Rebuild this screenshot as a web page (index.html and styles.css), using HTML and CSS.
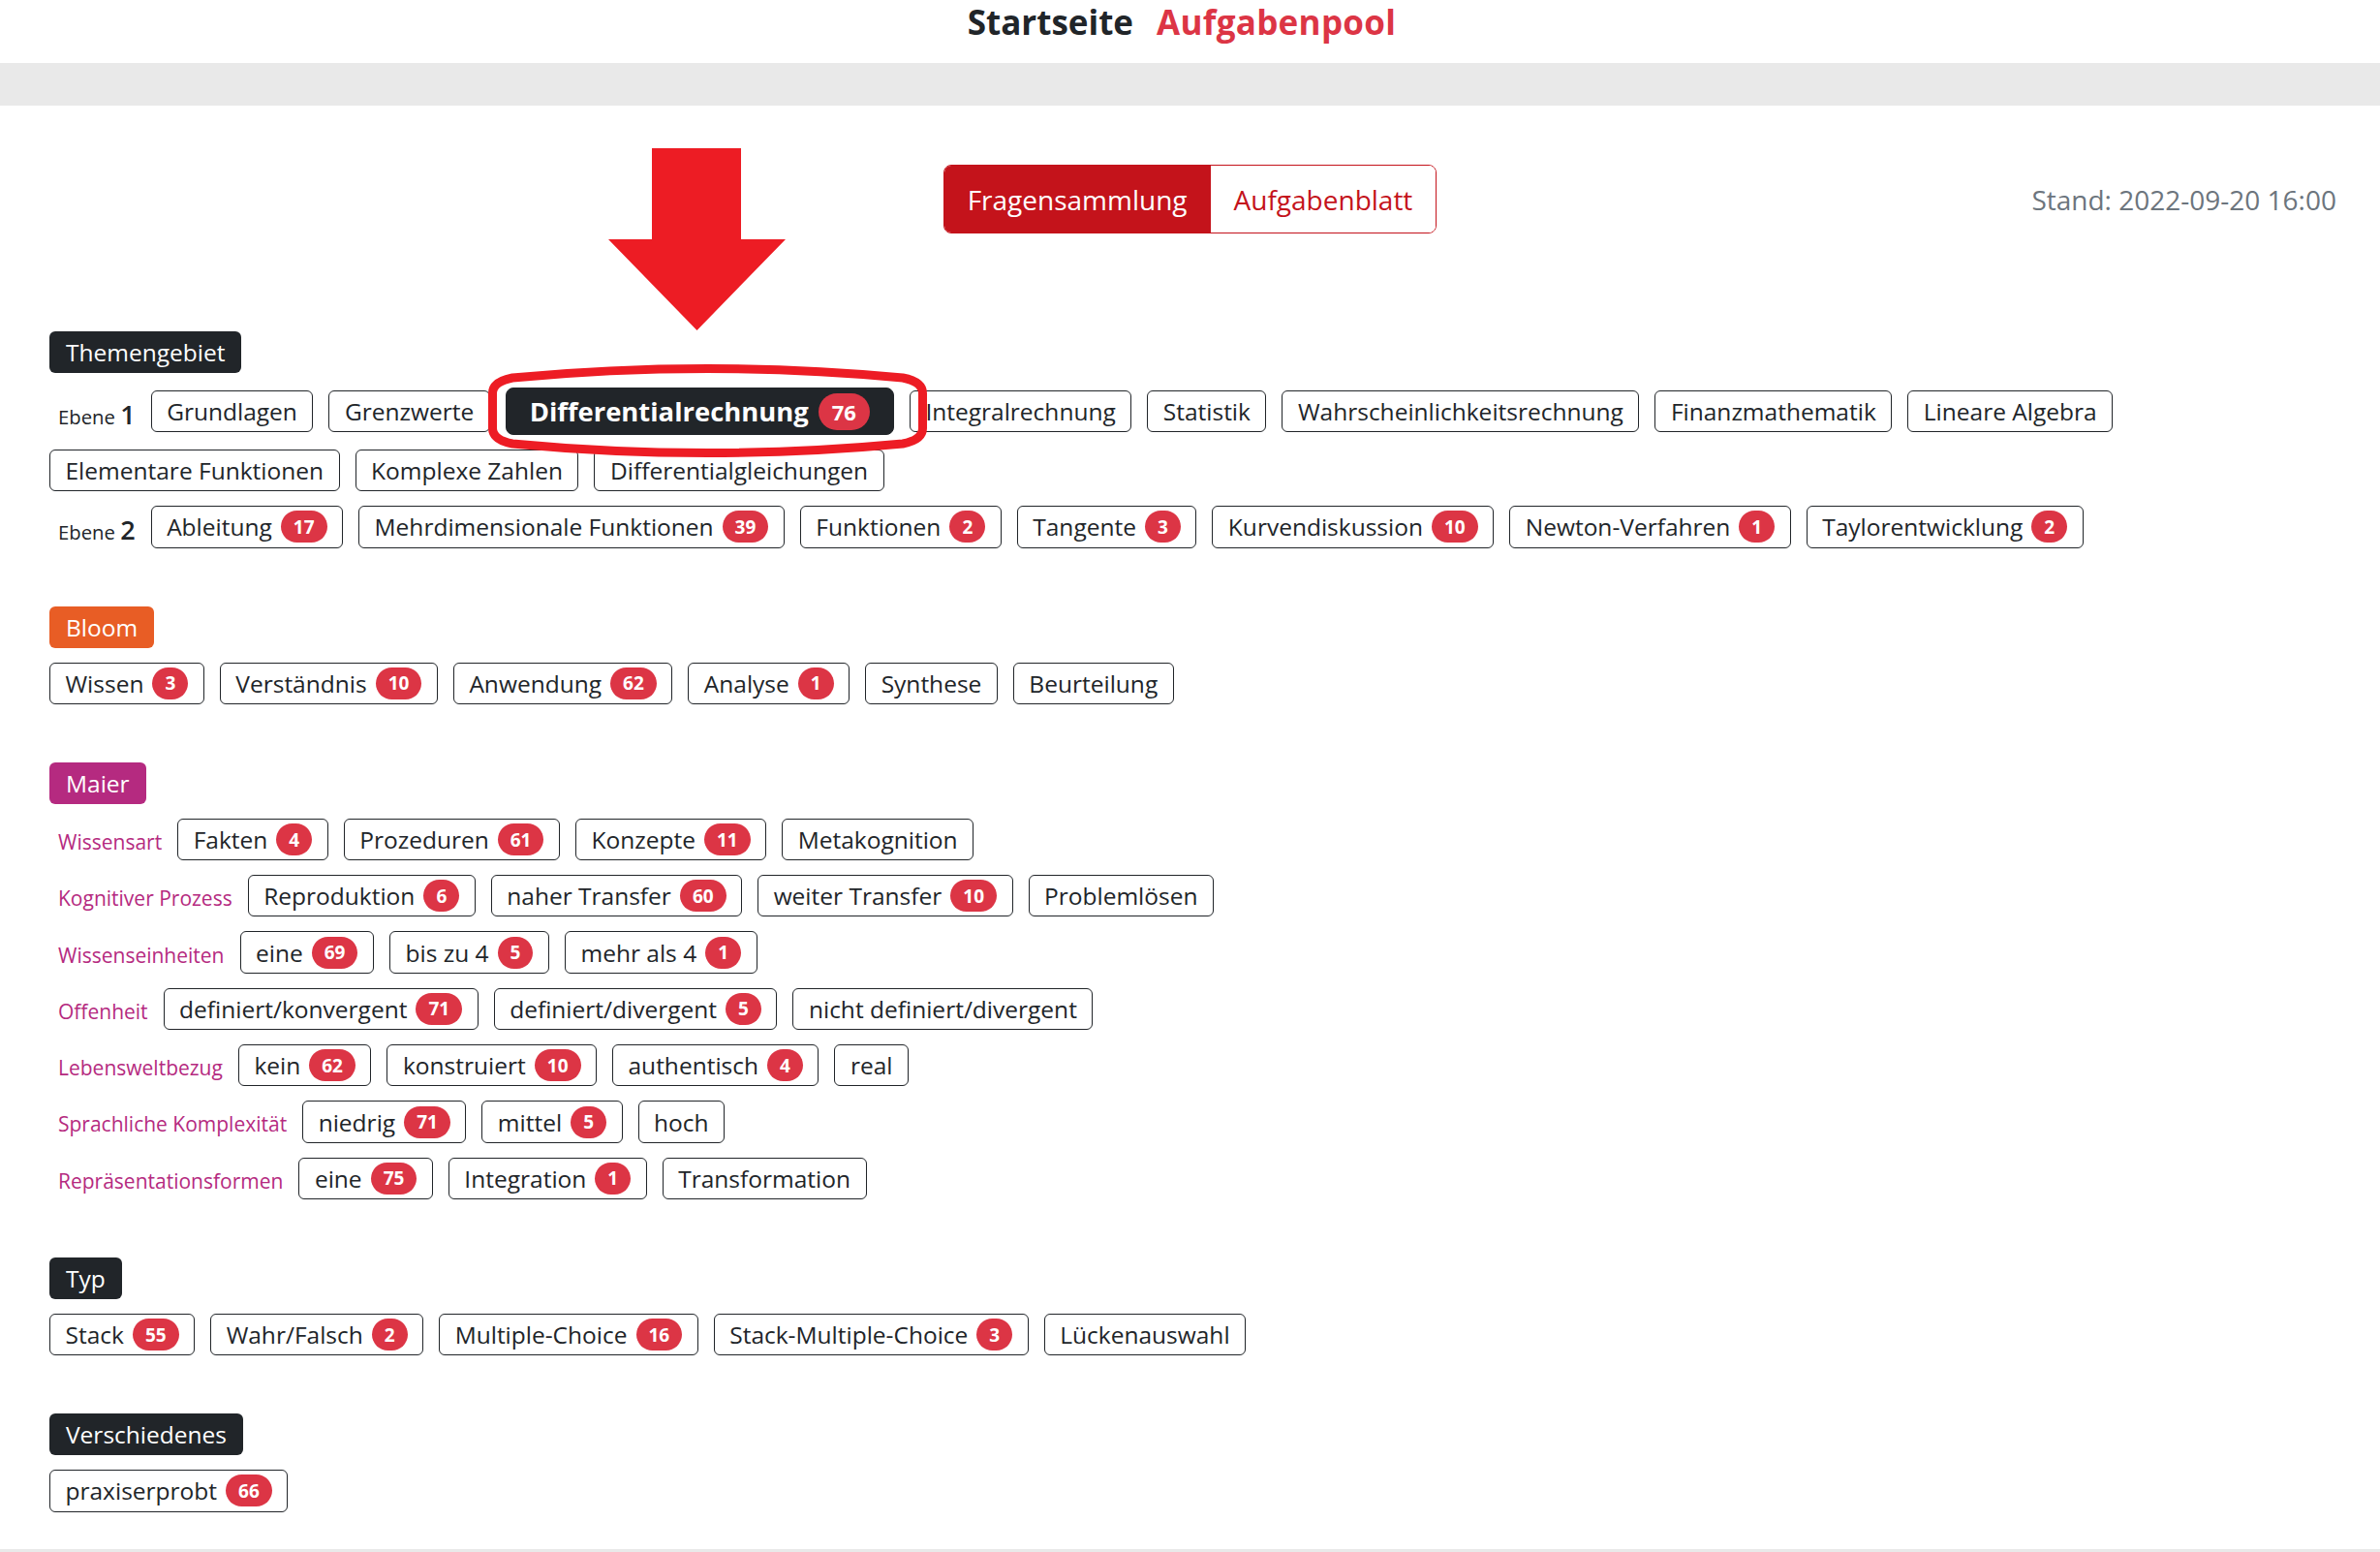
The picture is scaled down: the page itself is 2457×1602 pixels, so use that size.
FILE: index.html
```html
<!DOCTYPE html>
<html lang="de">
<head>
<meta charset="utf-8">
<title>Aufgabenpool</title>
<link rel="stylesheet" href="styles.css">
</head>
<body>
<header class="site-head">
  <span class="t-home">Startseite</span>
  <span class="t-pool">Aufgabenpool</span>
</header>
<div class="greybar"></div>

<main class="main">
  <div class="top">
    <div></div>
    <div class="toggle">
      <span class="tg tg-on">Fragensammlung</span>
      <span class="tg tg-off">Aufgabenblatt</span>
    </div>
    <div class="stand">Stand: 2022-09-20 16:00</div>
  </div>

  <div class="sections">
    <section class="section">
      <span class="hd hd-dark">Themengebiet</span>
      <div class="row">
        <span class="lvl">Ebene <span class="num">1</span></span>
        <span class="btn">Grundlagen</span>
        <span class="btn">Grenzwerte</span>
        <span class="btn sel">Differentialrechnung <span class="cnt">76</span></span>
        <span class="btn">Integralrechnung</span>
        <span class="btn">Statistik</span>
        <span class="btn">Wahrscheinlichkeitsrechnung</span>
        <span class="btn">Finanzmathematik</span>
        <span class="btn">Lineare Algebra</span>
        <span class="btn">Elementare Funktionen</span>
        <span class="btn">Komplexe Zahlen</span>
        <span class="btn">Differentialgleichungen</span>
      </div>
      <div class="row">
        <span class="lvl">Ebene <span class="num">2</span></span>
        <span class="btn">Ableitung <span class="cnt">17</span></span>
        <span class="btn">Mehrdimensionale Funktionen <span class="cnt">39</span></span>
        <span class="btn">Funktionen <span class="cnt">2</span></span>
        <span class="btn">Tangente <span class="cnt">3</span></span>
        <span class="btn">Kurvendiskussion <span class="cnt">10</span></span>
        <span class="btn">Newton-Verfahren <span class="cnt">1</span></span>
        <span class="btn">Taylorentwicklung <span class="cnt">2</span></span>
      </div>
    </section>

    <section class="section">
      <span class="hd hd-orange">Bloom</span>
      <div class="row">
        <span class="btn">Wissen <span class="cnt">3</span></span>
        <span class="btn">Verständnis <span class="cnt">10</span></span>
        <span class="btn">Anwendung <span class="cnt">62</span></span>
        <span class="btn">Analyse <span class="cnt">1</span></span>
        <span class="btn">Synthese</span>
        <span class="btn">Beurteilung</span>
      </div>
    </section>

    <section class="section">
      <span class="hd hd-magenta">Maier</span>
      <div class="row">
        <span class="mlbl">Wissensart</span>
        <span class="btn">Fakten <span class="cnt">4</span></span>
        <span class="btn">Prozeduren <span class="cnt">61</span></span>
        <span class="btn">Konzepte <span class="cnt">11</span></span>
        <span class="btn">Metakognition</span>
      </div>
      <div class="row">
        <span class="mlbl">Kognitiver Prozess</span>
        <span class="btn">Reproduktion <span class="cnt">6</span></span>
        <span class="btn">naher Transfer <span class="cnt">60</span></span>
        <span class="btn">weiter Transfer <span class="cnt">10</span></span>
        <span class="btn">Problemlösen</span>
      </div>
      <div class="row">
        <span class="mlbl">Wissenseinheiten</span>
        <span class="btn">eine <span class="cnt">69</span></span>
        <span class="btn">bis zu 4 <span class="cnt">5</span></span>
        <span class="btn">mehr als 4 <span class="cnt">1</span></span>
      </div>
      <div class="row">
        <span class="mlbl">Offenheit</span>
        <span class="btn">definiert/konvergent <span class="cnt">71</span></span>
        <span class="btn">definiert/divergent <span class="cnt">5</span></span>
        <span class="btn">nicht definiert/divergent</span>
      </div>
      <div class="row">
        <span class="mlbl">Lebensweltbezug</span>
        <span class="btn">kein <span class="cnt">62</span></span>
        <span class="btn">konstruiert <span class="cnt">10</span></span>
        <span class="btn">authentisch <span class="cnt">4</span></span>
        <span class="btn">real</span>
      </div>
      <div class="row">
        <span class="mlbl">Sprachliche Komplexität</span>
        <span class="btn">niedrig <span class="cnt">71</span></span>
        <span class="btn">mittel <span class="cnt">5</span></span>
        <span class="btn">hoch</span>
      </div>
      <div class="row">
        <span class="mlbl">Repräsentationsformen</span>
        <span class="btn">eine <span class="cnt">75</span></span>
        <span class="btn">Integration <span class="cnt">1</span></span>
        <span class="btn">Transformation</span>
      </div>
    </section>

    <section class="section">
      <span class="hd hd-dark">Typ</span>
      <div class="row">
        <span class="btn">Stack <span class="cnt">55</span></span>
        <span class="btn">Wahr/Falsch <span class="cnt">2</span></span>
        <span class="btn">Multiple-Choice <span class="cnt">16</span></span>
        <span class="btn">Stack-Multiple-Choice <span class="cnt">3</span></span>
        <span class="btn">Lückenauswahl</span>
      </div>
    </section>

    <section class="section">
      <span class="hd hd-dark">Verschiedenes</span>
      <div class="row">
        <span class="btn">praxiserprobt <span class="cnt">66</span></span>
      </div>
    </section>
  </div>
</main>
<footer class="foot"></footer>

<svg class="arrow" width="183" height="188" viewBox="0 0 183 188">
  <polygon points="45,0 137,0 137,94 183,94 91.5,188 0,94 45,94" fill="#ed1c24"/>
</svg>
<svg class="ring" width="453" height="96" viewBox="0 0 453 96">
  <path d="M4.5,30 Q4.5,18 25,14 Q226.5,-5 428,14 Q448.5,18 448.5,30 L448.5,66 Q448.5,78 428,82 Q226.5,101 25,82 Q4.5,78 4.5,66 Z" fill="none" stroke="#ed1c24" stroke-width="9"/>
</svg>
</body>
</html>
```

FILE: styles.css
```css
html, body {
  margin: 0;
  padding: 0;
}
body {
  position: relative;
  font-family: "Open Sans", "Liberation Sans", sans-serif;
  color: #212529;
  background: #fff;
  overflow: hidden;
}
.site-head {
  height: 65px;
  display: flex;
  justify-content: center;
  gap: 24px;
  padding-right: 17px;
  font-size: 35px;
  font-weight: 700;
  line-height: 1.2;
  padding-top: 2px;
  box-sizing: border-box;
}
.t-home { color: #212529; }
.t-pool { color: #dc3545; letter-spacing: 0.3px; }
.greybar {
  height: 44px;
  background: #e9e9e9;
}
.main {
  padding: 0 45px;
}
.top {
  display: grid;
  grid-template-columns: 1fr auto 1fr;
  align-items: center;
  margin-top: 61px;
}
.toggle {
  display: flex;
  height: 71px;
  box-sizing: border-box;
  border: 1.5px solid #c4131b;
  border-radius: 8px;
  overflow: hidden;
}
.tg {
  display: flex;
  align-items: center;
  padding: 0 24px;
  font-size: 28px;
}
.tg-on { background: #c4131b; color: #fff; }
.tg-off { background: #fff; color: #c4131b; }
.stand {
  justify-self: end;
  font-size: 28px;
  color: #6c757d;
}
.sections {
  padding-left: 6px;
  margin-top: 101px;
}
.section {
  display: flex;
  flex-direction: column;
  align-items: flex-start;
  gap: 15px;
}
.section + .section {
  margin-top: 60px;
}
.hd {
  display: inline-flex;
  align-items: center;
  height: 43px;
  padding: 0 17px;
  border-radius: 6px;
  color: #fff;
  font-size: 24.5px;
  box-sizing: border-box;
}
.hd-dark { background: #212529; }
.hd-orange { background: #e85d25; }
.hd-magenta { background: #b52a80; }
.row {
  display: flex;
  flex-wrap: wrap;
  align-items: center;
  column-gap: 16px;
  row-gap: 15px;
}
.btn {
  display: inline-flex;
  align-items: center;
  gap: 9px;
  height: 43.3px;
  box-sizing: border-box;
  padding: 0 15.5px;
  border: 1.5px solid #212529;
  border-radius: 6px;
  font-size: 24.5px;
  color: #212529;
  white-space: nowrap;
}
.btn.sel {
  height: 49px;
  padding: 0 24px;
  background: #212529;
  color: #fff;
  font-weight: 700;
  font-size: 27.4px;
  border-radius: 8px;
  gap: 10px;
}
.cnt {
  display: inline-flex;
  align-items: center;
  justify-content: center;
  height: 33px;
  min-width: 33px;
  padding: 0 13px;
  box-sizing: border-box;
  border-radius: 17px;
  background: #dc3545;
  color: #fff;
  font-size: 19px;
  font-weight: 700;
}
.sel .cnt {
  height: 38px;
  padding: 0 14px;
  border-radius: 19px;
  font-size: 22px;
}
.lvl {
  padding-left: 9px;
  padding-top: 7px;
  font-size: 20.3px;
  line-height: 1.2;
}
.lvl .num {
  font-size: 27px;
  font-weight: 600;
}
.mlbl {
  padding-left: 9px;
  padding-top: 6px;
  font-size: 21px;
  line-height: 1.2;
  color: #b52a80;
}
.foot {
  margin-top: 38px;
  height: 3px;
  background: #e9e9e9;
}
.arrow {
  position: absolute;
  left: 628px;
  top: 153px;
}
.ring {
  position: absolute;
  left: 504px;
  top: 376px;
  overflow: visible;
}
```
